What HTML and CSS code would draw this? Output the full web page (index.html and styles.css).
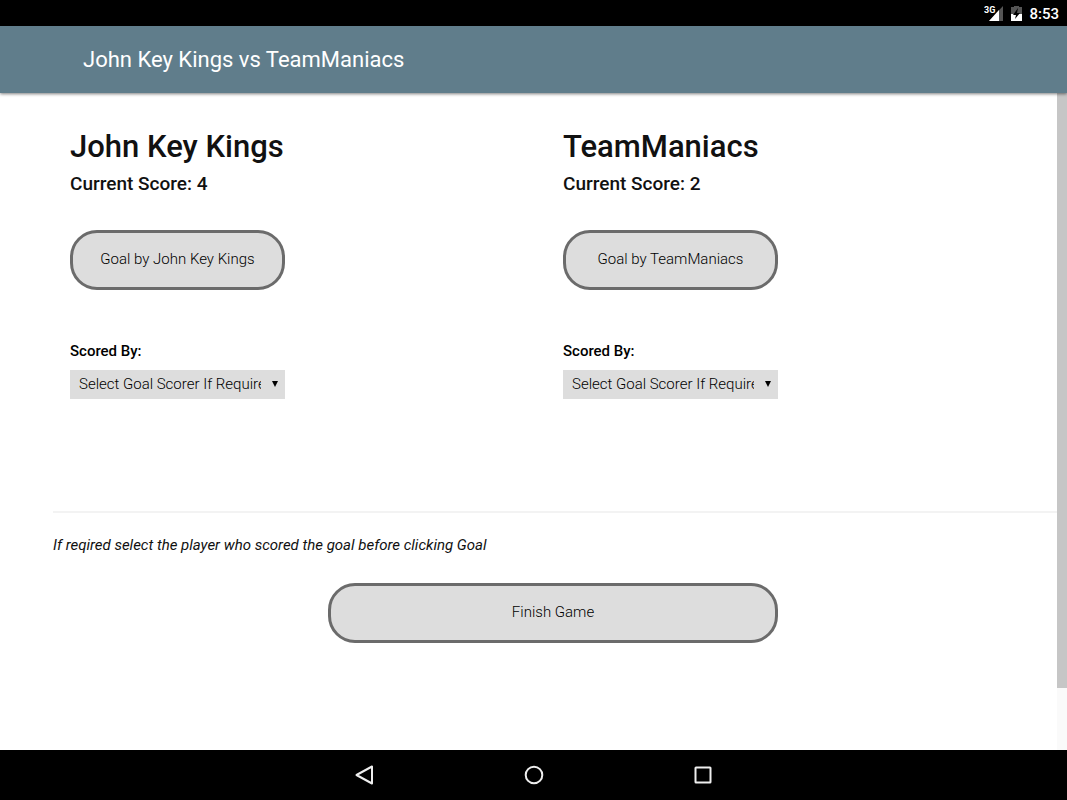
FILE: index.html
```html
<!DOCTYPE html>
<html lang="en">
<head>
    <meta charset="UTF-8">
    <meta name="viewport" content="width=device-width, initial-scale=1.0">
    <title>John Key Kings vs TeamManiacs</title>
    <link rel="stylesheet" href="styles.css">
</head>
<body>
    <div class="status-bar">
        <svg class="signal" width="20" height="18" viewBox="0 0 20 18" role="img" aria-label="Signal">
            <path d="M19 1v15H5z" fill="#555"/>
            <path d="M15 5v11H5z" fill="#fff"/>
            <text class="network" x="0" y="8">3G</text>
        </svg>
        <svg class="battery" width="11" height="16" viewBox="0 0 11 16" role="img" aria-label="Battery charging">
            <path d="M3 0h5v1h3v8H0V1h3z" fill="#555"/>
            <path d="M0 8h11v7H0z" fill="#fff"/>
            <path d="M7 2L2 9h3l-1 4 5-6H6z" fill="#000"/>
        </svg>
        <span class="clock">8:53</span>
    </div>

    <header class="header">
        <span class="header-title">John Key Kings vs TeamManiacs</span>
    </header>

    <div class="viewport">
        <main class="content">
            <div class="teams">
                <section class="team">
                    <h1>John Key Kings</h1>
                    <h2>Current Score: 4</h2>
                    <button class="game-button" type="button">Goal by John Key Kings</button>
                    <label for="scorer1">Scored By:</label>
                    <div class="select-box">
                        <select id="scorer1">
                            <option>Select Goal Scorer If Required</option>
                        </select>
                    </div>
                </section>
                <section class="team">
                    <h1>TeamManiacs</h1>
                    <h2>Current Score: 2</h2>
                    <button class="game-button" type="button">Goal by TeamManiacs</button>
                    <label for="scorer2">Scored By:</label>
                    <div class="select-box">
                        <select id="scorer2">
                            <option>Select Goal Scorer If Required</option>
                        </select>
                    </div>
                </section>
            </div>
            <hr>
            <p class="hint">If reqired select the player who scored the goal before clicking Goal</p>
            <div class="finish">
                <button class="game-button finish-button" type="button">Finish Game</button>
            </div>
        </main>
        <div class="scrollbar"><div class="thumb"></div></div>
    </div>

    <nav class="nav-bar">
        <button type="button" aria-label="Back">
            <svg width="22" height="22" viewBox="0 0 22 22"><path d="M18 2.5v17L2.5 11z"/></svg>
        </button>
        <button type="button" aria-label="Home">
            <svg width="22" height="22" viewBox="0 0 22 22"><circle cx="11" cy="11" r="8.3"/></svg>
        </button>
        <button type="button" aria-label="Recent apps">
            <svg width="22" height="22" viewBox="0 0 22 22"><rect x="3.5" y="3.5" width="15" height="15" rx="0.5"/></svg>
        </button>
    </nav>
</body>
</html>
```
FILE: styles.css
```css
* {
    box-sizing: border-box;
}
body {
    font-family: Roboto, Arial, sans-serif;
    font-size: 15px;
    color: #111;
    background-color: #fff;
    margin: 0;
    height: 100vh;
    display: flex;
    flex-direction: column;
}
.status-bar {
    background: #000;
    color: #fff;
    height: 26px;
    flex: none;
    display: flex;
    align-items: center;
    justify-content: flex-end;
    gap: 7px;
    padding: 2px 8px 0 0;
}
.network {
    font-size: 9px;
    font-weight: 700;
    fill: #fff;
}
.clock {
    font-size: 15px;
    font-weight: 500;
}
.header {
    background: #607d8b;
    color: #fff;
    height: 67px;
    flex: none;
    display: flex;
    align-items: center;
    padding-left: 83px;
    box-shadow: 0 1px 3px rgba(0, 0, 0, 0.5);
    position: relative;
}
.header-title {
    font-size: 22px;
}
.viewport {
    flex: 1;
    min-height: 0;
    display: flex;
}
.content {
    flex: 1;
    padding-left: 53px;
    overflow: hidden;
}
.teams {
    display: grid;
    grid-template-columns: 1fr 1fr;
    padding: 34px 1px 0 17px;
}
.team {
    display: flex;
    flex-direction: column;
    align-items: flex-start;
}
h1 {
    font-size: 31px;
    line-height: 40px;
    font-weight: 500;
    margin: 0;
}
h2 {
    font-size: 19px;
    line-height: 24px;
    font-weight: 500;
    margin: 5px 0 34px;
}
.game-button {
    font: inherit;
    font-weight: 300;
    color: #000;
    width: 215px;
    height: 60px;
    padding: 0 0 3px;
    background: #ddd;
    border: 3px solid #6b6b6b;
    border-radius: 27px;
    cursor: pointer;
}
.team label {
    font-weight: 500;
    color: #000;
    line-height: 20px;
    margin: 51px 0 9px;
}
.select-box {
    position: relative;
}
.select-box::after {
    content: "";
    position: absolute;
    right: 7px;
    top: 11px;
    border: 3px solid transparent;
    border-top: 6px solid #000;
    border-bottom: 0;
    pointer-events: none;
}
select {
    appearance: none;
    font: inherit;
    font-weight: 300;
    color: #000;
    width: 215px;
    height: 29px;
    padding: 0 24px 2px 9px;
    background: #ddd;
    border: 0;
    border-radius: 0;
    text-overflow: clip;
}
hr {
    border: 0;
    border-top: 2px solid #f3f3f3;
    margin: 112px 0 0;
}
.hint {
    font-style: italic;
    line-height: 20px;
    margin: 22px 0 28px;
}
.finish {
    display: flex;
    justify-content: center;
    padding-right: 4px;
}
.finish-button {
    width: 45%;
}
.scrollbar {
    width: 10px;
    background: #fafafa;
}
.thumb {
    height: 90.6%;
    background: #c6c6c6;
}
.nav-bar {
    background: #000;
    height: 50px;
    flex: none;
    display: flex;
    align-items: center;
    justify-content: center;
    gap: 147px;
}
.nav-bar button {
    background: none;
    border: 0;
    padding: 0;
    display: flex;
    cursor: pointer;
}
.nav-bar svg {
    fill: none;
    stroke: #eee;
    stroke-width: 2;
    stroke-linejoin: round;
}
```
